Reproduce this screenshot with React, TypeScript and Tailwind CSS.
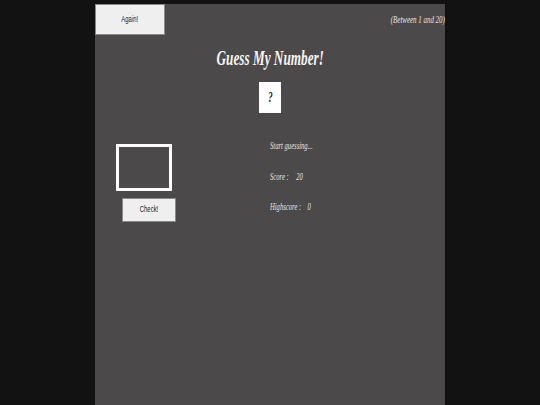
import { useState } from 'react';

const serif = { fontFamily: '"Liberation Serif", "Times New Roman", serif' };
const sans = { fontFamily: '"Liberation Sans", Arial, sans-serif' };

function Squeezed({ children, origin = 'origin-left' }: { children: React.ReactNode; origin?: string }) {
  return <span className={`inline-block whitespace-nowrap scale-x-[0.63] ${origin}`}>{children}</span>;
}

export default function App() {
  const [guess, setGuess] = useState('');
  const [score] = useState(20);
  const [highscore] = useState(0);

  return (
    <div className="min-h-screen bg-[#121212] flex justify-center pt-[4px]">
      <div className="w-[350px] min-h-[401px] bg-[#4b4949] flex flex-col">
        {/* top bar */}
        <div className="flex items-center justify-between h-[31px]">
          <button
            className="w-[70px] h-[31px] bg-[#efefef] border border-[#8a8a8a] text-[9px] text-[#222]"
            style={sans}
          >
            <span className="inline-block scale-x-[0.66]">Again!</span>
          </button>
          <p className="italic text-[11px] leading-none text-[#e4e4e4] text-right" style={serif}>
            <Squeezed origin="origin-right">(Between 1 and 20)</Squeezed>
          </p>
        </div>

        <h1
          className="mt-[13px] text-center font-bold italic text-[21px] leading-none text-[#f4f4f4]"
          style={serif}
        >
          <Squeezed origin="origin-center">Guess My Number!</Squeezed>
        </h1>

        <div className="mt-[13px] flex justify-center">
          <div
            className="w-[22px] h-[31px] bg-white flex items-center justify-center font-bold italic text-[14px] text-[#111]"
            style={serif}
          >
            <Squeezed origin="origin-center">?</Squeezed>
          </div>
        </div>

        <div className="mt-[27px] grid grid-cols-2">
          <div className="flex flex-col items-start pt-[4px]">
            <input
              value={guess}
              onChange={(e) => setGuess(e.target.value)}
              className="ml-[21px] w-[56px] h-[47px] border-[3px] border-white bg-transparent outline-none text-white text-center"
            />
            <button
              className="ml-[27px] mt-[7px] w-[54px] h-[24px] bg-[#efefef] border border-[#8a8a8a] text-[9px] text-[#222]"
              style={sans}
            >
              <span className="inline-block scale-x-[0.66]">Check!</span>
            </button>
          </div>
          <div className="flex flex-col pt-[1px] italic text-[10.5px] leading-none text-[#e4e4e4]" style={serif}>
            <p className="h-[30.5px]">
              <Squeezed>Start guessing...</Squeezed>
            </p>
            <p className="h-[30.5px]">
              <Squeezed>
                Score :<span className="ml-[12px]">{score}</span>
              </Squeezed>
            </p>
            <p className="h-[30.5px]">
              <Squeezed>
                Highscore :<span className="ml-[10px]">{highscore}</span>
              </Squeezed>
            </p>
          </div>
        </div>
      </div>
    </div>
  );
}
